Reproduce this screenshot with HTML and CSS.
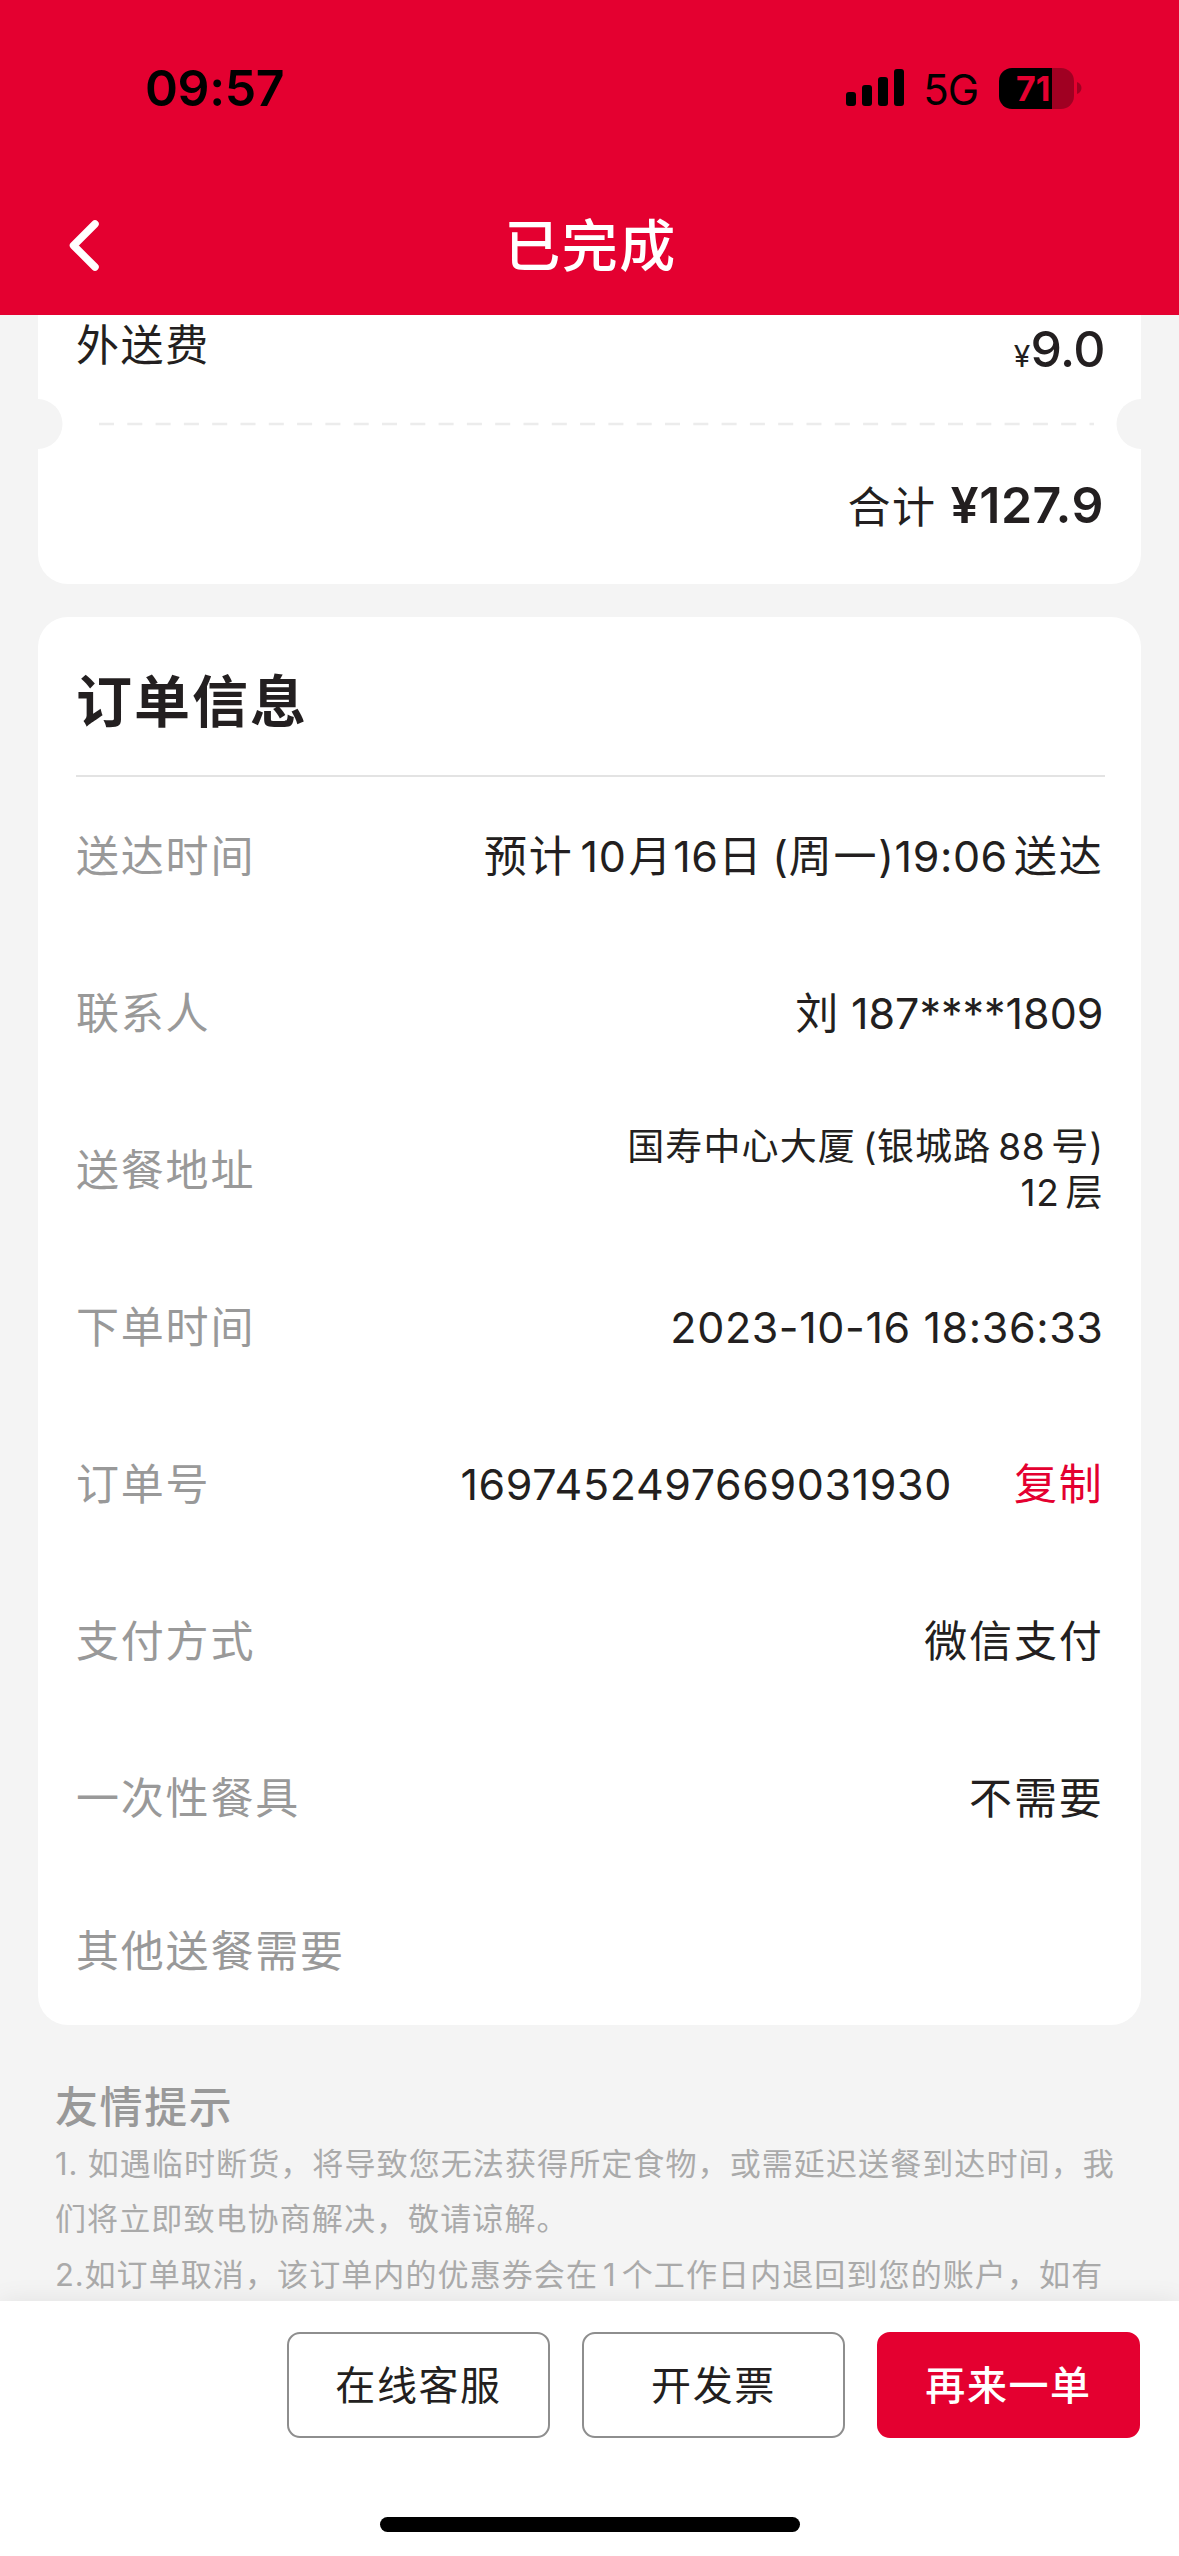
FILE: index.html
```html
<!DOCTYPE html>
<html lang="zh-CN">
<head>
    <meta charset="UTF-8">
    <title>已完成</title>
    <link rel="stylesheet" href="styles.css">
</head>
<body>
    <div class="page">
        <div class="header">
            <div class="status">
                <span class="time">09:57</span>
                <div class="status-right">
                    <svg class="signal" width="58" height="38" viewBox="0 0 58 38">
                        <rect x="0" y="23" width="10" height="14" rx="3"/>
                        <rect x="16" y="16" width="10" height="21" rx="3"/>
                        <rect x="32" y="8" width="10" height="29" rx="3"/>
                        <rect x="48" y="0" width="10" height="37" rx="3"/>
                    </svg>
                    <span class="net">5G</span>
                    <div class="battery"><span>71</span></div>
                    <svg class="nub" width="5" height="12" viewBox="0 0 5 12">
                        <path d="M0 0C6 2 6 10 0 12Z"/>
                    </svg>
                </div>
            </div>
            <div class="nav">
                <svg class="back" width="34" height="56" viewBox="0 0 34 56">
                    <path d="M28 6L6.5 27.5L28 49"/>
                </svg>
                <h1>已完成</h1>
            </div>
        </div>
        <div class="content">
            <div class="card fee">
                <div class="fee-row">
                    <span>外送费</span>
                    <span class="price"><i>¥</i>9.0</span>
                </div>
                <div class="cut">
                    <svg width="1103" height="50" viewBox="0 0 1103 50">
                        <circle cx="-0.5" cy="25" r="25"/>
                        <circle cx="1103.5" cy="25" r="25"/>
                        <line x1="61" y1="25" x2="1056" y2="25"/>
                    </svg>
                </div>
                <div class="total">
                    <span>合计</span>
                    <b>¥127.9</b>
                </div>
            </div>
            <div class="card info">
                <h2>订单信息</h2>
                <ul>
                    <li><label>送达时间</label><p>预计<em class="before short">10</em>月<em>16</em>日<em class="gap">(</em>周一<em class="after">)19:06</em>送达</p></li>
                    <li><label>联系人</label><p>刘<em class="gap phone">187****1809</em></p></li>
                    <li><label>送餐地址</label><p class="address">国寿中心大厦<em class="before">(</em>银城路<em class="before after">88</em>号<em>)</em><br><em class="after">12</em>层</p></li>
                    <li><label>下单时间</label><p><em>2023-10-16 18:36:33</em></p></li>
                    <li><label>订单号</label><p><em>1697452497669031930</em><a class="copy">复制</a></p></li>
                    <li><label>支付方式</label><p>微信支付</p></li>
                    <li><label>一次性餐具</label><p>不需要</p></li>
                    <li><label>其他送餐需要</label></li>
                </ul>
            </div>
            <div class="tips">
                <h3>友情提示</h3>
                <p><i>1. </i>如遇临时断货，将导致您无法获得所定食物，或需延迟送餐到达时间，我<br>们将立即致电协商解决，敬请谅解。<br><i>2.</i>如订单取消，该订单内的优惠券会在<em>1</em>个工作日内退回到您的账户，如有</p>
            </div>
        </div>
        <div class="footer">
            <div class="btns">
                <a class="btn">在线客服</a>
                <a class="btn">开发票</a>
                <a class="btn red">再来一单</a>
            </div>
            <div class="home"></div>
        </div>
    </div>
</body>
</html>
```
FILE: styles.css
```css
* {
    margin: 0;
    padding: 0;
    box-sizing: border-box;
}
body {
    background: #f4f4f4;
    color: #231f20;
    font-family: Inter, "Noto Sans CJK SC", sans-serif;
}
em, i {
    font-style: normal;
}
svg {
    display: block;
}
.page {
    width: 1179px;
    height: 2556px;
    display: flex;
    flex-direction: column;
    overflow: hidden;
}

/* 顶部 */
.header {
    height: 315px;
    background: #e40030;
    flex-shrink: 0;
}
.status {
    height: 176px;
    padding: 0 97px 0 145px;
    display: flex;
    align-items: center;
    justify-content: space-between;
    color: #000;
}
.time {
    font-size: 50px;
    font-weight: 600;
    letter-spacing: -0.4px;
}
.status-right {
    display: flex;
    align-items: center;
}
.net {
    margin: 2px 21px 0 19px;
    font-size: 42px;
    letter-spacing: -1px;
}
.battery {
    width: 75px;
    height: 41px;
    border-radius: 13px;
    background: linear-gradient(to right, #000 53px, #a00022 53px);
    color: #e40030;
    font-size: 34px;
    font-weight: 700;
    line-height: 41px;
    padding-left: 17px;
}
.nub {
    margin-left: 3px;
    fill: #a00022;
}
.nav {
    height: 139px;
    padding: 0 67px;
    display: grid;
    grid-template-columns: 34px 1fr 34px;
    align-items: center;
}
.back path {
    fill: none;
    stroke: #fff;
    stroke-width: 7.5;
    stroke-linecap: round;
    stroke-linejoin: round;
}
.nav h1 {
    color: #fff;
    font-size: 56px;
    font-weight: 500;
    letter-spacing: 1.5px;
    line-height: 60px;
    padding: 1px 0 0 2px;
    text-align: center;
}

/* 内容 */
.content {
    flex: 1;
    min-height: 0;
    overflow: hidden;
    padding: 0 38px;
}
.card {
    background: #fff;
    border-radius: 30px;
}
.fee {
    height: 269px;
    border-radius: 0 0 30px 30px;
    font-size: 43px;
    letter-spacing: 1.6px;
}
.fee-row {
    height: 84px;
    padding: 0 36px 0 38px;
    display: flex;
    justify-content: space-between;
    line-height: 61px;
}
.price {
    font-size: 50px;
    font-weight: 500;
    letter-spacing: -0.6px;
    line-height: 69px;
}
.price i {
    font-size: 30px;
    font-weight: 400;
    margin-right: 1px;
}
.cut circle {
    fill: #f4f4f4;
}
.cut line {
    stroke: #ececec;
    stroke-width: 2.5;
    stroke-dasharray: 15 13.3;
}
.total {
    height: 116px;
    padding-right: 37px;
    display: flex;
    justify-content: flex-end;
    align-items: baseline;
    line-height: 113px;
}
.total b {
    margin-left: 14px;
    font-size: 50px;
    font-weight: 600;
    letter-spacing: 0.5px;
}
.info {
    height: 1408px;
    margin-top: 33px;
    padding: 0 36px 0 38px;
}
.info h2 {
    height: 160px;
    border-bottom: 2px solid #e3e3e3;
    font-size: 56px;
    font-weight: 700;
    letter-spacing: 2px;
    line-height: 171px;
}
.info ul {
    list-style: none;
}
.info li {
    height: 157px;
    display: flex;
    align-items: center;
    justify-content: space-between;
    font-size: 43px;
    letter-spacing: 1.8px;
    line-height: 60px;
}
.info li:last-child {
    height: 150px;
}
.info label {
    color: #999;
}
.info p {
    padding-right: 1.5px;
    text-align: right;
    white-space: nowrap;
}
.info em {
    letter-spacing: 0.6px;
}
.info .gap {
    margin-left: 9px;
}
.info .phone {
    margin-left: 11px;
    letter-spacing: 0;
}
.info .before {
    margin-left: 7px;
}
.info .after {
    margin-right: 6px;
}
.info .short {
    margin-right: 2px;
}
.info .address {
    font-size: 37px;
    letter-spacing: 1.1px;
    line-height: 46px;
}
.info .copy {
    margin-left: 62px;
    color: #e40030;
}

/* 友情提示 */
.tips {
    padding: 54px 0 0 17px;
}
.tips h3 {
    color: #999;
    font-size: 43px;
    font-weight: 500;
    letter-spacing: 1.6px;
    line-height: 57px;
}
.tips p {
    color: #aaa;
    font-size: 31px;
    letter-spacing: 1.1px;
    line-height: 55.4px;
    white-space: nowrap;
}
.tips i {
    letter-spacing: 0.8px;
}
.tips em {
    margin: 0 5px;
}

/* 底部 */
.footer {
    height: 255px;
    flex-shrink: 0;
    position: relative;
    background: #fff;
    box-shadow: 0 0 24px rgba(0, 0, 0, 0.08);
}
.btns {
    padding: 31px 39px 0 0;
    display: flex;
    justify-content: flex-end;
    gap: 32px;
}
.btn {
    width: 263px;
    height: 106px;
    border: 2px solid #8e8e8e;
    border-radius: 13px;
    font-size: 40px;
    letter-spacing: 1.6px;
    line-height: 103px;
    text-align: center;
}
.btn.red {
    border-color: #e40030;
    background: #e40030;
    color: #fff;
    font-weight: 500;
}
.home {
    width: 420px;
    height: 15px;
    margin: 79px auto 0;
    border-radius: 8px;
    background: #000;
}
```
